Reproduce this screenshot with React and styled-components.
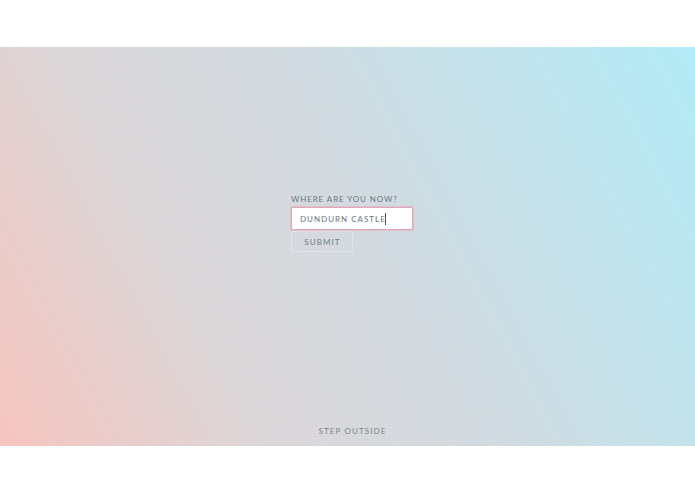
import { createGlobalStyle, styled } from "styled-components";

const GlobalStyle = createGlobalStyle`
    html, body {
        margin: 0;
        padding: 0;
        background-color: #ffffff;
        font-family: Lato, "Open Sans", "Liberation Sans", sans-serif;
    }
`;

const App = () => {
    return (
        <Page>
            <GlobalStyle />
            <TopBar />
            <Hero>
                <Spacer />
                <Form>
                    <Label htmlFor="where">Where are you now?</Label>
                    <Field id="where">
                        DUNDURN CASTLE
                        <Caret />
                    </Field>
                    <Submit>Submit</Submit>
                </Form>
                <Footer>Step outside</Footer>
            </Hero>
            <BottomBar />
        </Page>
    );
};

const Page = styled.div`
    width: 100%;
    min-height: 100vh;
    display: flex;
    flex-direction: column;
`;

const TopBar = styled.div`
    height: 47px;
    background-color: #ffffff;
`;

const BottomBar = styled.div`
    flex: 1;
    background-color: #ffffff;
`;

const Hero = styled.div`
    height: 399px;
    box-sizing: border-box;
    padding-left: 9px;
    display: flex;
    flex-direction: column;
    align-items: center;
    background: linear-gradient(62deg, #f6c5bf 0%, #dbd7d9 30%, #d3dadf 52%, #c4e2ea 75%, #b1eaf5 100%);
`;

const Spacer = styled.div`
    height: 147px;
`;

const Form = styled.div`
    width: 122px;
    display: flex;
    flex-direction: column;
    align-items: flex-start;
    flex: 1;
`;

const Label = styled.label`
    font-size: 8px;
    letter-spacing: 0.9px;
    text-transform: uppercase;
    color: #687880;
    line-height: 11px;
    margin-bottom: 2px;
    white-space: nowrap;
`;

const Field = styled.div`
    box-sizing: border-box;
    width: 122px;
    height: 23px;
    background-color: #ffffff;
    border: 1px solid #e2a6bb;
    border-radius: 2px;
    box-shadow: 0 0 1px 0.5px rgba(232, 170, 192, 0.6);
    padding-left: 8px;
    display: flex;
    align-items: center;
    font-size: 8px;
    letter-spacing: 1px;
    color: #66737a;
    white-space: nowrap;
`;

const Caret = styled.span`
    display: inline-block;
    width: 1px;
    height: 12px;
    background-color: #50585c;
    margin-left: -1px;
`;

const Submit = styled.button`
    margin-top: 1px;
    width: 62px;
    height: 21px;
    box-sizing: border-box;
    background-color: transparent;
    border: 1px solid rgba(255, 255, 255, 0.3);
    border-radius: 1px;
    font-family: Lato, "Open Sans", "Liberation Sans", sans-serif;
    font-size: 8px;
    letter-spacing: 1.1px;
    text-transform: uppercase;
    color: #6f7e86;
    padding: 0 0 0 1px;
`;

const Footer = styled.p`
    margin: 0 0 10px 0;
    padding-left: 1px;
    font-size: 8px;
    letter-spacing: 1.1px;
    text-transform: uppercase;
    color: #78858b;
`;

export default App;
